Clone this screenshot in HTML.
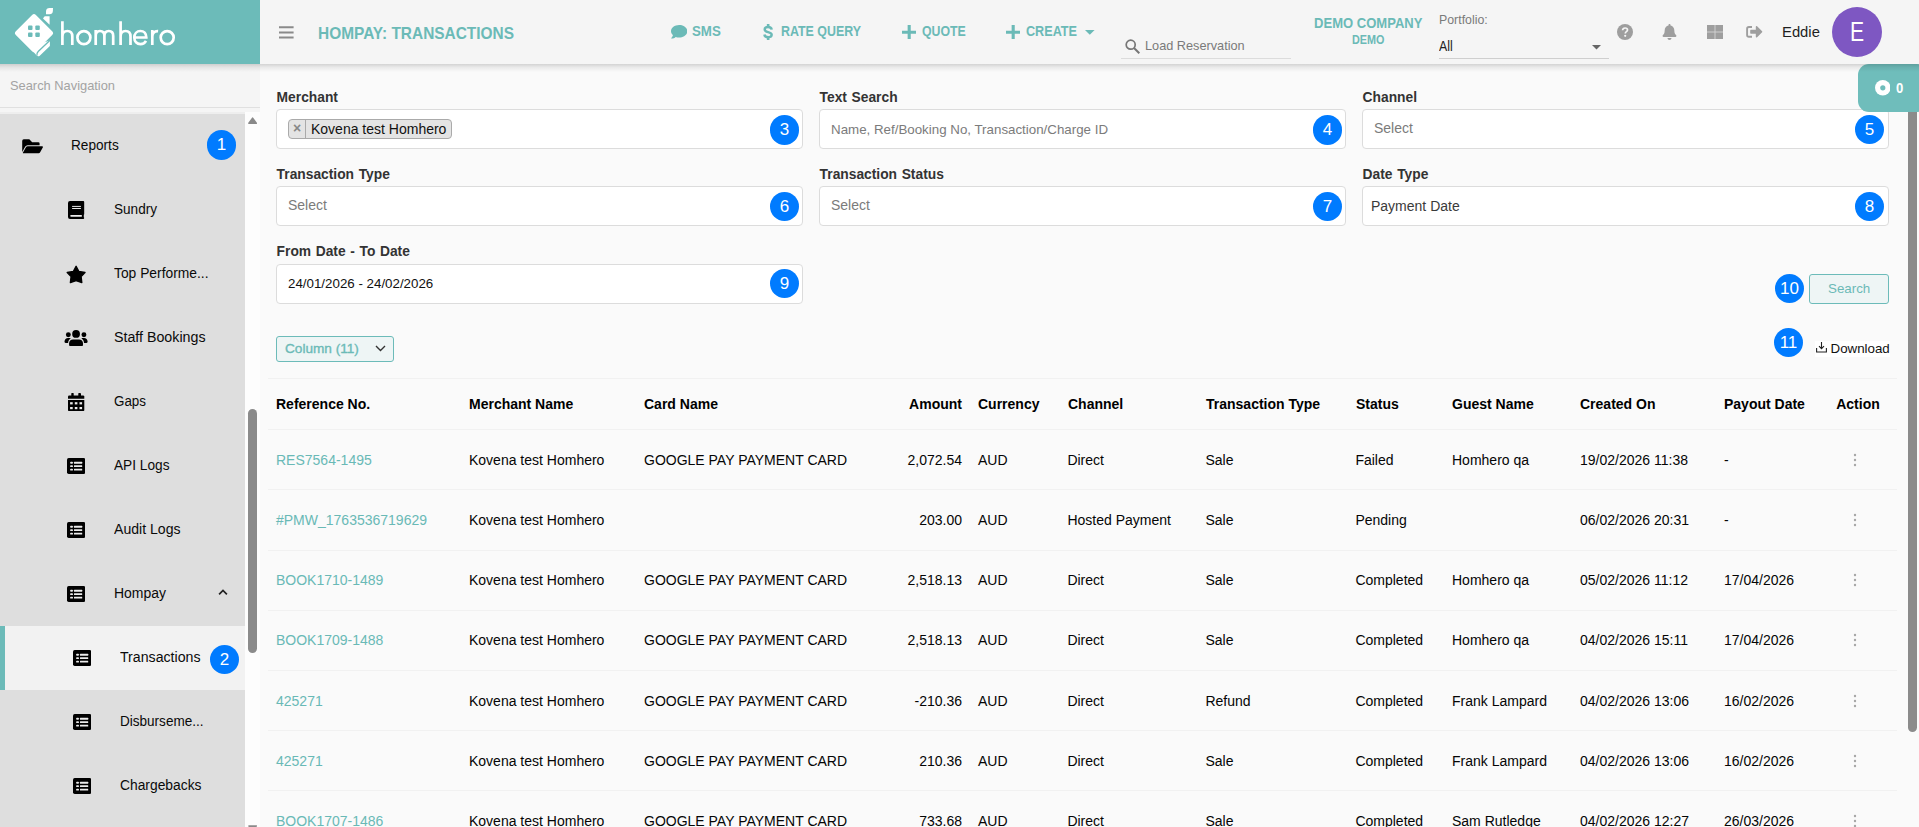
<!DOCTYPE html>
<html lang="en"><head><meta charset="utf-8"><title>Hompay: Transactions</title>
<style>
*{box-sizing:border-box}
html,body{margin:0;padding:0;background:#fafafa}
body{width:1919px;height:827px;overflow:hidden;position:relative;font-family:"Liberation Sans",sans-serif;font-size:14px;color:#222}
#app{position:absolute;left:0;top:0;width:1919px;height:827px;overflow:hidden;background:#fafafa}
#app span,#app div,#app svg{position:absolute}
.bdg{border-radius:50%;background:#007bff;color:#fff;text-align:center;font-family:"Liberation Sans",sans-serif}
.box{background:#fff;border:1px solid #dcdcdc;border-radius:4px}
.hl{height:1px;background:#f1f1f1;left:268px;width:1629px}
</style></head>
<body><div id="app">
<span style="position:absolute;top:87.50px;line-height:20px;font-size:13.8px;color:#333;font-weight:700;white-space:pre;word-spacing:0.8px;left:276.60px;">Merchant</span>
<div class="box" style="left:276px;top:109px;width:527px;height:39.5px"></div>
<span class="bdg" style="left:769.85px;top:115.45px;width:29.5px;height:29.5px;line-height:29.5px;font-size:17px">3</span>
<span style="position:absolute;top:87.50px;line-height:20px;font-size:13.8px;color:#333;font-weight:700;white-space:pre;word-spacing:0.8px;left:819.60px;">Text Search</span>
<div class="box" style="left:819px;top:109px;width:527px;height:39.5px"></div>
<span class="bdg" style="left:1312.85px;top:115.45px;width:29.5px;height:29.5px;line-height:29.5px;font-size:17px">4</span>
<span style="position:absolute;top:87.50px;line-height:20px;font-size:13.8px;color:#333;font-weight:700;white-space:pre;word-spacing:0.8px;left:1362.60px;">Channel</span>
<div class="box" style="left:1362px;top:109px;width:527px;height:39.5px"></div>
<span class="bdg" style="left:1854.85px;top:114.85px;width:29.5px;height:29.5px;line-height:29.5px;font-size:17px">5</span>
<span style="position:absolute;top:164.50px;line-height:20px;font-size:13.8px;color:#333;font-weight:700;white-space:pre;word-spacing:0.8px;left:276.60px;">Transaction Type</span>
<div class="box" style="left:276px;top:186.2px;width:527px;height:39.5px"></div>
<span class="bdg" style="left:769.85px;top:191.65px;width:29.5px;height:29.5px;line-height:29.5px;font-size:17px">6</span>
<span style="position:absolute;top:164.50px;line-height:20px;font-size:13.8px;color:#333;font-weight:700;white-space:pre;word-spacing:0.8px;left:819.60px;">Transaction Status</span>
<div class="box" style="left:819px;top:186.2px;width:527px;height:39.5px"></div>
<span class="bdg" style="left:1312.85px;top:191.65px;width:29.5px;height:29.5px;line-height:29.5px;font-size:17px">7</span>
<span style="position:absolute;top:164.50px;line-height:20px;font-size:13.8px;color:#333;font-weight:700;white-space:pre;word-spacing:0.8px;left:1362.60px;">Date Type</span>
<div class="box" style="left:1362px;top:186.2px;width:527px;height:39.5px"></div>
<span class="bdg" style="left:1854.85px;top:191.65px;width:29.5px;height:29.5px;line-height:29.5px;font-size:17px">8</span>
<span style="position:absolute;top:241.50px;line-height:20px;font-size:13.8px;color:#333;font-weight:700;white-space:pre;word-spacing:0.8px;left:276.60px;">From Date - To Date</span>
<div class="box" style="left:276px;top:264px;width:527px;height:39.5px"></div>
<span class="bdg" style="left:769.85px;top:268.65px;width:29.5px;height:29.5px;line-height:29.5px;font-size:17px">9</span>
<div style="left:288px;top:119px;width:164px;height:20px;border:1px solid #aaa;border-radius:4px;background:#e4e4e4"></div>
<div style="left:304.500px;top:120px;width:1px;height:18px;background:#aaa"></div>
<span style="position:absolute;top:118.00px;line-height:20px;font-size:14px;color:#888;font-weight:700;white-space:pre;left:293.00px;">×</span>
<span style="position:absolute;top:119.00px;line-height:20px;font-size:14px;color:#111;font-weight:400;white-space:pre;left:311.00px;">Kovena test Homhero</span>
<span style="position:absolute;top:120.20px;line-height:20px;font-size:13.333px;color:#7b7b7b;font-weight:400;white-space:pre;left:831.00px;">Name, Ref/Booking No, Transaction/Charge ID</span>
<span style="position:absolute;top:117.60px;line-height:20px;font-size:14px;color:#7b7b7b;font-weight:400;white-space:pre;left:1374.00px;">Select</span>
<span style="position:absolute;top:194.60px;line-height:20px;font-size:14px;color:#7b7b7b;font-weight:400;white-space:pre;left:288.00px;">Select</span>
<span style="position:absolute;top:194.60px;line-height:20px;font-size:14px;color:#7b7b7b;font-weight:400;white-space:pre;left:831.00px;">Select</span>
<span style="position:absolute;top:196.30px;line-height:20px;font-size:14px;color:#3a3a3a;font-weight:400;white-space:pre;left:1371.00px;">Payment Date</span>
<span style="position:absolute;top:273.50px;line-height:20px;font-size:13.333px;color:#111;font-weight:400;white-space:pre;left:288.00px;">24/01/2026 - 24/02/2026</span>
<div style="left:1809.200px;top:274px;width:80.200px;height:29.500px;border:1px solid #6cbbb9;border-radius:3px;background:#eef5f5"></div>
<span style="position:absolute;top:278.60px;line-height:20px;font-size:13.333px;color:#6bbab7;font-weight:400;white-space:pre;left:1828.00px;">Search</span>
<span class="bdg" style="left:1774.75px;top:273.95px;width:29.5px;height:29.5px;line-height:29.5px;font-size:17px">10</span>
<span class="bdg" style="left:1773.75px;top:327.95px;width:29.5px;height:29.5px;line-height:29.5px;font-size:17px">11</span>
<div style="left:1814.500px;top:341px;width:75px;height:15.500px;background:#fff"></div>
<svg style="left:1815.500px;top:342px" width="11" height="11" viewBox="0 0 11 11"><path d="M.6 6v4h9.800V6M5.500 0v6.500M3 4.200l2.500 2.500L8 4.200" fill="none" stroke="#222" stroke-width="1.100"/></svg>
<span style="position:absolute;top:338.60px;line-height:20px;font-size:13.333px;color:#111;font-weight:400;white-space:pre;left:1830.50px;">Download</span>
<div style="left:276px;top:336.200px;width:118px;height:25.600px;border:1px solid #6cbbb9;border-radius:3px;background:#eef5f5"></div>
<span style="position:absolute;top:338.60px;line-height:20px;font-size:13.7px;color:#6bbab7;font-weight:400;white-space:pre;-webkit-text-stroke:.35px #6bbab7;left:285.20px;transform:scaleX(0.9947);transform-origin:0 50%;">Column (11)</span>
<svg style="left:374.900px;top:345.400px" width="11" height="7" viewBox="0 0 11 7"><path d="M1 1l4.500 4.500L10 1" fill="none" stroke="#333" stroke-width="1.400"/></svg>
<div class="hl" style="top:378px"></div>
<div class="hl" style="top:429px"></div>
<div class="hl" style="top:489px"></div>
<div class="hl" style="top:550px"></div>
<div class="hl" style="top:610px"></div>
<div class="hl" style="top:670px"></div>
<div class="hl" style="top:730px"></div>
<div class="hl" style="top:790px"></div>
<span style="position:absolute;top:394.30px;line-height:20px;font-size:14px;color:#000;font-weight:700;white-space:pre;left:276.00px;">Reference No.</span>
<span style="position:absolute;top:394.30px;line-height:20px;font-size:14px;color:#000;font-weight:700;white-space:pre;left:469.00px;">Merchant Name</span>
<span style="position:absolute;top:394.30px;line-height:20px;font-size:14px;color:#000;font-weight:700;white-space:pre;left:644.00px;">Card Name</span>
<span style="position:absolute;top:394.30px;line-height:20px;font-size:14px;color:#000;font-weight:700;white-space:pre;left:978.00px;">Currency</span>
<span style="position:absolute;top:394.30px;line-height:20px;font-size:14px;color:#000;font-weight:700;white-space:pre;left:1068.00px;">Channel</span>
<span style="position:absolute;top:394.30px;line-height:20px;font-size:14px;color:#000;font-weight:700;white-space:pre;left:1206.00px;">Transaction Type</span>
<span style="position:absolute;top:394.30px;line-height:20px;font-size:14px;color:#000;font-weight:700;white-space:pre;left:1356.00px;">Status</span>
<span style="position:absolute;top:394.30px;line-height:20px;font-size:14px;color:#000;font-weight:700;white-space:pre;left:1452.00px;">Guest Name</span>
<span style="position:absolute;top:394.30px;line-height:20px;font-size:14px;color:#000;font-weight:700;white-space:pre;left:1580.00px;">Created On</span>
<span style="position:absolute;top:394.30px;line-height:20px;font-size:14px;color:#000;font-weight:700;white-space:pre;left:1724.00px;">Payout Date</span>
<span style="position:absolute;top:394.30px;line-height:20px;font-size:14px;color:#000;font-weight:700;white-space:pre;left:1836.20px;">Action</span>
<span style="position:absolute;top:394.30px;line-height:20px;font-size:14px;color:#000;font-weight:700;white-space:pre;right:957.00px;">Amount</span>
<span style="position:absolute;top:450.30px;line-height:20px;font-size:14px;color:#69b9b6;font-weight:400;white-space:pre;left:276.00px;">RES7564-1495</span>
<span style="position:absolute;top:450.30px;line-height:20px;font-size:14px;color:#050505;font-weight:400;white-space:pre;left:469.00px;">Kovena test Homhero</span>
<span style="position:absolute;top:450.30px;line-height:20px;font-size:14px;color:#050505;font-weight:400;white-space:pre;left:644.00px;">GOOGLE PAY PAYMENT CARD</span>
<span style="position:absolute;top:450.30px;line-height:20px;font-size:14px;color:#050505;font-weight:400;white-space:pre;right:957.00px;">2,072.54</span>
<span style="position:absolute;top:450.30px;line-height:20px;font-size:14px;color:#050505;font-weight:400;white-space:pre;left:978.00px;">AUD</span>
<span style="position:absolute;top:450.30px;line-height:20px;font-size:14px;color:#050505;font-weight:400;white-space:pre;left:1067.40px;">Direct</span>
<span style="position:absolute;top:450.30px;line-height:20px;font-size:14px;color:#050505;font-weight:400;white-space:pre;left:1205.40px;">Sale</span>
<span style="position:absolute;top:450.30px;line-height:20px;font-size:14px;color:#050505;font-weight:400;white-space:pre;left:1355.40px;">Failed</span>
<span style="position:absolute;top:450.30px;line-height:20px;font-size:14px;color:#050505;font-weight:400;white-space:pre;left:1452.00px;">Homhero qa</span>
<span style="position:absolute;top:450.30px;line-height:20px;font-size:14px;color:#050505;font-weight:400;white-space:pre;left:1580.00px;">19/02/2026 11:38</span>
<span style="position:absolute;top:450.30px;line-height:20px;font-size:14px;color:#050505;font-weight:400;white-space:pre;left:1724.00px;">-</span>
<svg style="left:1853px;top:453.00px" width="4" height="14" viewBox="0 0 4 14"><g fill="#a6a6a6"><circle cx="2" cy="2" r="1.200"/><circle cx="2" cy="7" r="1.200"/><circle cx="2" cy="12" r="1.200"/></g></svg>
<span style="position:absolute;top:510.30px;line-height:20px;font-size:14px;color:#69b9b6;font-weight:400;white-space:pre;left:276.00px;">#PMW_1763536719629</span>
<span style="position:absolute;top:510.30px;line-height:20px;font-size:14px;color:#050505;font-weight:400;white-space:pre;left:469.00px;">Kovena test Homhero</span>
<span style="position:absolute;top:510.30px;line-height:20px;font-size:14px;color:#050505;font-weight:400;white-space:pre;right:957.00px;">203.00</span>
<span style="position:absolute;top:510.30px;line-height:20px;font-size:14px;color:#050505;font-weight:400;white-space:pre;left:978.00px;">AUD</span>
<span style="position:absolute;top:510.30px;line-height:20px;font-size:14px;color:#050505;font-weight:400;white-space:pre;left:1067.40px;">Hosted Payment</span>
<span style="position:absolute;top:510.30px;line-height:20px;font-size:14px;color:#050505;font-weight:400;white-space:pre;left:1205.40px;">Sale</span>
<span style="position:absolute;top:510.30px;line-height:20px;font-size:14px;color:#050505;font-weight:400;white-space:pre;left:1355.40px;">Pending</span>
<span style="position:absolute;top:510.30px;line-height:20px;font-size:14px;color:#050505;font-weight:400;white-space:pre;left:1580.00px;">06/02/2026 20:31</span>
<span style="position:absolute;top:510.30px;line-height:20px;font-size:14px;color:#050505;font-weight:400;white-space:pre;left:1724.00px;">-</span>
<svg style="left:1853px;top:513.00px" width="4" height="14" viewBox="0 0 4 14"><g fill="#a6a6a6"><circle cx="2" cy="2" r="1.200"/><circle cx="2" cy="7" r="1.200"/><circle cx="2" cy="12" r="1.200"/></g></svg>
<span style="position:absolute;top:570.30px;line-height:20px;font-size:14px;color:#69b9b6;font-weight:400;white-space:pre;left:276.00px;">BOOK1710-1489</span>
<span style="position:absolute;top:570.30px;line-height:20px;font-size:14px;color:#050505;font-weight:400;white-space:pre;left:469.00px;">Kovena test Homhero</span>
<span style="position:absolute;top:570.30px;line-height:20px;font-size:14px;color:#050505;font-weight:400;white-space:pre;left:644.00px;">GOOGLE PAY PAYMENT CARD</span>
<span style="position:absolute;top:570.30px;line-height:20px;font-size:14px;color:#050505;font-weight:400;white-space:pre;right:957.00px;">2,518.13</span>
<span style="position:absolute;top:570.30px;line-height:20px;font-size:14px;color:#050505;font-weight:400;white-space:pre;left:978.00px;">AUD</span>
<span style="position:absolute;top:570.30px;line-height:20px;font-size:14px;color:#050505;font-weight:400;white-space:pre;left:1067.40px;">Direct</span>
<span style="position:absolute;top:570.30px;line-height:20px;font-size:14px;color:#050505;font-weight:400;white-space:pre;left:1205.40px;">Sale</span>
<span style="position:absolute;top:570.30px;line-height:20px;font-size:14px;color:#050505;font-weight:400;white-space:pre;left:1355.40px;">Completed</span>
<span style="position:absolute;top:570.30px;line-height:20px;font-size:14px;color:#050505;font-weight:400;white-space:pre;left:1452.00px;">Homhero qa</span>
<span style="position:absolute;top:570.30px;line-height:20px;font-size:14px;color:#050505;font-weight:400;white-space:pre;left:1580.00px;">05/02/2026 11:12</span>
<span style="position:absolute;top:570.30px;line-height:20px;font-size:14px;color:#050505;font-weight:400;white-space:pre;left:1724.00px;">17/04/2026</span>
<svg style="left:1853px;top:573.00px" width="4" height="14" viewBox="0 0 4 14"><g fill="#a6a6a6"><circle cx="2" cy="2" r="1.200"/><circle cx="2" cy="7" r="1.200"/><circle cx="2" cy="12" r="1.200"/></g></svg>
<span style="position:absolute;top:630.30px;line-height:20px;font-size:14px;color:#69b9b6;font-weight:400;white-space:pre;left:276.00px;">BOOK1709-1488</span>
<span style="position:absolute;top:630.30px;line-height:20px;font-size:14px;color:#050505;font-weight:400;white-space:pre;left:469.00px;">Kovena test Homhero</span>
<span style="position:absolute;top:630.30px;line-height:20px;font-size:14px;color:#050505;font-weight:400;white-space:pre;left:644.00px;">GOOGLE PAY PAYMENT CARD</span>
<span style="position:absolute;top:630.30px;line-height:20px;font-size:14px;color:#050505;font-weight:400;white-space:pre;right:957.00px;">2,518.13</span>
<span style="position:absolute;top:630.30px;line-height:20px;font-size:14px;color:#050505;font-weight:400;white-space:pre;left:978.00px;">AUD</span>
<span style="position:absolute;top:630.30px;line-height:20px;font-size:14px;color:#050505;font-weight:400;white-space:pre;left:1067.40px;">Direct</span>
<span style="position:absolute;top:630.30px;line-height:20px;font-size:14px;color:#050505;font-weight:400;white-space:pre;left:1205.40px;">Sale</span>
<span style="position:absolute;top:630.30px;line-height:20px;font-size:14px;color:#050505;font-weight:400;white-space:pre;left:1355.40px;">Completed</span>
<span style="position:absolute;top:630.30px;line-height:20px;font-size:14px;color:#050505;font-weight:400;white-space:pre;left:1452.00px;">Homhero qa</span>
<span style="position:absolute;top:630.30px;line-height:20px;font-size:14px;color:#050505;font-weight:400;white-space:pre;left:1580.00px;">04/02/2026 15:11</span>
<span style="position:absolute;top:630.30px;line-height:20px;font-size:14px;color:#050505;font-weight:400;white-space:pre;left:1724.00px;">17/04/2026</span>
<svg style="left:1853px;top:633.00px" width="4" height="14" viewBox="0 0 4 14"><g fill="#a6a6a6"><circle cx="2" cy="2" r="1.200"/><circle cx="2" cy="7" r="1.200"/><circle cx="2" cy="12" r="1.200"/></g></svg>
<span style="position:absolute;top:691.30px;line-height:20px;font-size:14px;color:#69b9b6;font-weight:400;white-space:pre;left:276.00px;">425271</span>
<span style="position:absolute;top:691.30px;line-height:20px;font-size:14px;color:#050505;font-weight:400;white-space:pre;left:469.00px;">Kovena test Homhero</span>
<span style="position:absolute;top:691.30px;line-height:20px;font-size:14px;color:#050505;font-weight:400;white-space:pre;left:644.00px;">GOOGLE PAY PAYMENT CARD</span>
<span style="position:absolute;top:691.30px;line-height:20px;font-size:14px;color:#050505;font-weight:400;white-space:pre;right:957.00px;">-210.36</span>
<span style="position:absolute;top:691.30px;line-height:20px;font-size:14px;color:#050505;font-weight:400;white-space:pre;left:978.00px;">AUD</span>
<span style="position:absolute;top:691.30px;line-height:20px;font-size:14px;color:#050505;font-weight:400;white-space:pre;left:1067.40px;">Direct</span>
<span style="position:absolute;top:691.30px;line-height:20px;font-size:14px;color:#050505;font-weight:400;white-space:pre;left:1205.40px;">Refund</span>
<span style="position:absolute;top:691.30px;line-height:20px;font-size:14px;color:#050505;font-weight:400;white-space:pre;left:1355.40px;">Completed</span>
<span style="position:absolute;top:691.30px;line-height:20px;font-size:14px;color:#050505;font-weight:400;white-space:pre;left:1452.00px;">Frank Lampard</span>
<span style="position:absolute;top:691.30px;line-height:20px;font-size:14px;color:#050505;font-weight:400;white-space:pre;left:1580.00px;">04/02/2026 13:06</span>
<span style="position:absolute;top:691.30px;line-height:20px;font-size:14px;color:#050505;font-weight:400;white-space:pre;left:1724.00px;">16/02/2026</span>
<svg style="left:1853px;top:694.00px" width="4" height="14" viewBox="0 0 4 14"><g fill="#a6a6a6"><circle cx="2" cy="2" r="1.200"/><circle cx="2" cy="7" r="1.200"/><circle cx="2" cy="12" r="1.200"/></g></svg>
<span style="position:absolute;top:751.30px;line-height:20px;font-size:14px;color:#69b9b6;font-weight:400;white-space:pre;left:276.00px;">425271</span>
<span style="position:absolute;top:751.30px;line-height:20px;font-size:14px;color:#050505;font-weight:400;white-space:pre;left:469.00px;">Kovena test Homhero</span>
<span style="position:absolute;top:751.30px;line-height:20px;font-size:14px;color:#050505;font-weight:400;white-space:pre;left:644.00px;">GOOGLE PAY PAYMENT CARD</span>
<span style="position:absolute;top:751.30px;line-height:20px;font-size:14px;color:#050505;font-weight:400;white-space:pre;right:957.00px;">210.36</span>
<span style="position:absolute;top:751.30px;line-height:20px;font-size:14px;color:#050505;font-weight:400;white-space:pre;left:978.00px;">AUD</span>
<span style="position:absolute;top:751.30px;line-height:20px;font-size:14px;color:#050505;font-weight:400;white-space:pre;left:1067.40px;">Direct</span>
<span style="position:absolute;top:751.30px;line-height:20px;font-size:14px;color:#050505;font-weight:400;white-space:pre;left:1205.40px;">Sale</span>
<span style="position:absolute;top:751.30px;line-height:20px;font-size:14px;color:#050505;font-weight:400;white-space:pre;left:1355.40px;">Completed</span>
<span style="position:absolute;top:751.30px;line-height:20px;font-size:14px;color:#050505;font-weight:400;white-space:pre;left:1452.00px;">Frank Lampard</span>
<span style="position:absolute;top:751.30px;line-height:20px;font-size:14px;color:#050505;font-weight:400;white-space:pre;left:1580.00px;">04/02/2026 13:06</span>
<span style="position:absolute;top:751.30px;line-height:20px;font-size:14px;color:#050505;font-weight:400;white-space:pre;left:1724.00px;">16/02/2026</span>
<svg style="left:1853px;top:754.00px" width="4" height="14" viewBox="0 0 4 14"><g fill="#a6a6a6"><circle cx="2" cy="2" r="1.200"/><circle cx="2" cy="7" r="1.200"/><circle cx="2" cy="12" r="1.200"/></g></svg>
<span style="position:absolute;top:811.30px;line-height:20px;font-size:14px;color:#69b9b6;font-weight:400;white-space:pre;left:276.00px;">BOOK1707-1486</span>
<span style="position:absolute;top:811.30px;line-height:20px;font-size:14px;color:#050505;font-weight:400;white-space:pre;left:469.00px;">Kovena test Homhero</span>
<span style="position:absolute;top:811.30px;line-height:20px;font-size:14px;color:#050505;font-weight:400;white-space:pre;left:644.00px;">GOOGLE PAY PAYMENT CARD</span>
<span style="position:absolute;top:811.30px;line-height:20px;font-size:14px;color:#050505;font-weight:400;white-space:pre;right:957.00px;">733.68</span>
<span style="position:absolute;top:811.30px;line-height:20px;font-size:14px;color:#050505;font-weight:400;white-space:pre;left:978.00px;">AUD</span>
<span style="position:absolute;top:811.30px;line-height:20px;font-size:14px;color:#050505;font-weight:400;white-space:pre;left:1067.40px;">Direct</span>
<span style="position:absolute;top:811.30px;line-height:20px;font-size:14px;color:#050505;font-weight:400;white-space:pre;left:1205.40px;">Sale</span>
<span style="position:absolute;top:811.30px;line-height:20px;font-size:14px;color:#050505;font-weight:400;white-space:pre;left:1355.40px;">Completed</span>
<span style="position:absolute;top:811.30px;line-height:20px;font-size:14px;color:#050505;font-weight:400;white-space:pre;left:1452.00px;">Sam Rutledge</span>
<span style="position:absolute;top:811.30px;line-height:20px;font-size:14px;color:#050505;font-weight:400;white-space:pre;left:1580.00px;">04/02/2026 12:27</span>
<span style="position:absolute;top:811.30px;line-height:20px;font-size:14px;color:#050505;font-weight:400;white-space:pre;left:1724.00px;">26/03/2026</span>
<svg style="left:1853px;top:814.00px" width="4" height="14" viewBox="0 0 4 14"><g fill="#a6a6a6"><circle cx="2" cy="2" r="1.200"/><circle cx="2" cy="7" r="1.200"/><circle cx="2" cy="12" r="1.200"/></g></svg>
<div style="left:1908px;top:70px;width:9px;height:662px;border-radius:4.500px;background:#8b8b8b"></div>
<div style="left:1858px;top:64px;width:70px;height:47.700px;border-radius:11px;background:#6fbdbb"></div><svg style="left:1874.600px;top:80.200px" width="15.600" height="15.600" viewBox="0 0 15.600 15.600"><circle cx="7.800" cy="7.800" r="7.800" fill="#fff"/><circle cx="7.800" cy="7.800" r="2.600" fill="#6fbdbb"/></svg><span style="position:absolute;top:77.80px;line-height:20px;font-size:14.5px;color:#fff;font-weight:700;white-space:pre;left:1895.90px;transform:scaleX(0.9037);transform-origin:0 50%;">0</span>
<div style="left:0;top:64px;width:260px;height:763px;background:#f5f5f5"></div>
<div style="left:0;top:107px;width:260px;height:1px;background:#e0e0e0"></div>
<span style="position:absolute;top:75.50px;line-height:20px;font-size:13px;color:#a3a3a3;font-weight:400;white-space:pre;left:10.20px;transform:scaleX(0.9884);transform-origin:0 50%;">Search Navigation</span>
<div style="left:0;top:112px;width:245px;height:2px;background:#eee"></div><div style="left:0;top:114px;width:245px;height:714px;background:#dedede"></div>
<div style="left:245px;top:112px;width:15px;height:716px;background:#fdfdfd"></div>
<svg style="left:247.900px;top:116.700px" width="9.200" height="7.200" viewBox="0 0 9.200 7.200"><path d="M4.600 1.100 8.300 6.300H.9z" fill="#8a8a8a" stroke="#8a8a8a" stroke-width="1.500" stroke-linejoin="round"/></svg>
<svg style="left:247.900px;top:825.400px" width="9.200" height="7.200" viewBox="0 0 9.200 7.200"><path d="M4.600 6.100 8.300.9H.9z" fill="#8a8a8a" stroke="#8a8a8a" stroke-width="1.500" stroke-linejoin="round"/></svg>
<div style="left:248px;top:409px;width:9px;height:244px;border-radius:4.500px;background:#8b8b8b"></div>
<div style="left:0;top:626px;width:245px;height:64.300px;background:#f2f2f2"></div>
<div style="left:0;top:626px;width:5px;height:64.300px;background:#6cbbb9"></div>
<svg style="left:21.5px;top:138.5px" width="21.500" height="15" viewBox="0 0 21.500 15"><path fill="#000" d="M.2 1.900Q.2.300 1.800.300H7.300L10.200 3.200H16.300Q17.600 3.200 17.600 4.500V6.200H5.700Q3.900 6.200 3.100 7.700L.2 13.100zM5.800 7.300H20.200Q21.400 7.300 20.800 8.400L18 13.600Q17.600 14.300 16.700 14.300H1.500Q.5 14.300 1 13.400L3.800 8.400Q4.400 7.300 5.800 7.300z"/></svg>
<span style="position:absolute;top:135.20px;line-height:20px;font-size:14px;color:#0a0a0a;font-weight:400;white-space:pre;left:70.50px;transform:scaleX(0.9728);transform-origin:0 50%;">Reports</span>
<svg style="left:68.3px;top:201px" width="16.400" height="18" viewBox="0 0 16.400 18"><path fill="#000" d="M2 0H15.300Q16.200 0 16.200.900V13Q16.200 13.600 15.800 13.800V16.200Q16.200 16.400 16.200 16.900Q16.200 17.900 15.300 17.900H2Q0 17.900 0 15.900V2Q0 0 2 0z"/><g fill="#ececec"><rect x="4.100" y="4.900" width="8.800" height="1"/><rect x="4.100" y="7" width="8.800" height="1"/><path d="M3.200 13.900H13.800V15.800H3.200Q2.200 15.800 2.200 14.850Q2.200 13.900 3.200 13.900z"/></g></svg>
<span style="position:absolute;top:199.20px;line-height:20px;font-size:14px;color:#0a0a0a;font-weight:400;white-space:pre;left:114.00px;transform:scaleX(0.9694);transform-origin:0 50%;">Sundry</span>
<svg style="left:66px;top:264.5px" width="20.500" height="19" viewBox="0 0 20.500 19"><path fill="#000" stroke="#000" stroke-width="1.400" stroke-linejoin="round" d="M10.100 1.300 12.900 6.500 19 7.500 15.100 11.600 15.800 17.500 10.100 15.700 4.400 17.500 5.100 11.600 1.200 7.500 7.300 6.500z"/></svg>
<span style="position:absolute;top:263.20px;line-height:20px;font-size:14px;color:#0a0a0a;font-weight:400;white-space:pre;left:114.00px;transform:scaleX(0.9874);transform-origin:0 50%;">Top Performe...</span>
<svg style="left:64px;top:330px" width="24.200" height="16.500" viewBox="0 0 24.200 16.500"><g fill="#000"><circle cx="12.070" cy="3.960" r="3.900"/><path d="M5.100 14.900V13.200C5.100 11 6.800 9.400 9 9.400h6.100c2.200 0 3.900 1.600 3.900 3.800V14.900c0 .6-.5 1.100-1.100 1.100H6.200c-.6 0-1.100-.5-1.100-1.100z"/><circle cx="4.330" cy="4.800" r="2.450"/><circle cx="19.950" cy="4.800" r="2.450"/><path d="M.5 11.800C.5 9.700 2 8.100 4.100 8.100h1.300c.5 0 .9.100 1.300.3C5.200 9.300 4.200 10.900 4.100 12.900H1.600C1 12.900.5 12.400.5 11.800zM23.640 11.800c0-2.100-1.500-3.700-3.600-3.700h-1.300c-.5 0-.9.100-1.300.3 1.500.9 2.500 2.500 2.600 4.500h2.500c.6 0 1.100-.5 1.100-1.100z"/></g></svg>
<span style="position:absolute;top:327.20px;line-height:20px;font-size:14px;color:#0a0a0a;font-weight:400;white-space:pre;left:114.00px;transform:scaleX(1.0163);transform-origin:0 50%;">Staff Bookings</span>
<svg style="left:68.2px;top:392.9px" width="16.400" height="18.200" viewBox="0 0 16.400 18.200"><g fill="#000"><path d="M0 3.600Q0 2.400 1.200 2.400H15.100Q16.300 2.400 16.300 3.600V5.800H0z"/><path d="M0 7.100H16.300V16.900Q16.300 18.100 15.100 18.100H1.200Q0 18.100 0 16.900z"/><rect x="3.300" y="0" width="2.400" height="3.400" rx=".5"/><rect x="10.300" y="0" width="2.700" height="3.400" rx=".5"/></g><g fill="#ececec"><rect x="2.100" y="9.200" width="2.600" height="2.200"/><rect x="6.800" y="9.200" width="2.600" height="2.200"/><rect x="11.500" y="9.200" width="2.600" height="2.200"/><rect x="2.100" y="14" width="2.600" height="2.200"/><rect x="6.800" y="14" width="2.600" height="2.200"/><rect x="11.500" y="14" width="2.600" height="2.200"/></g></svg>
<span style="position:absolute;top:391.20px;line-height:20px;font-size:14px;color:#0a0a0a;font-weight:400;white-space:pre;left:114.00px;transform:scaleX(0.9561);transform-origin:0 50%;">Gaps</span>
<svg style="left:66.9px;top:458.1px" width="18.400" height="16" viewBox="0 0 18.400 16"><rect width="18.400" height="16" rx="1.700" fill="#000"/><g fill="#ececec"><rect x="3.100" y="3.850" width="2.900" height="1.900" rx=".9"/><rect x="3.100" y="7.150" width="2.900" height="1.900" rx=".9"/><rect x="3.100" y="10.650" width="2.900" height="1.900" rx=".9"/><rect x="7" y="3.850" width="8.200" height="1.900" rx=".3"/><rect x="7" y="7.150" width="8.200" height="1.900" rx=".3"/><rect x="7" y="10.650" width="8.200" height="1.900" rx=".3"/></g></svg>
<span style="position:absolute;top:455.20px;line-height:20px;font-size:14px;color:#0a0a0a;font-weight:400;white-space:pre;left:114.00px;transform:scaleX(0.9766);transform-origin:0 50%;">API Logs</span>
<svg style="left:66.9px;top:522.1px" width="18.400" height="16" viewBox="0 0 18.400 16"><rect width="18.400" height="16" rx="1.700" fill="#000"/><g fill="#ececec"><rect x="3.100" y="3.850" width="2.900" height="1.900" rx=".9"/><rect x="3.100" y="7.150" width="2.900" height="1.900" rx=".9"/><rect x="3.100" y="10.650" width="2.900" height="1.900" rx=".9"/><rect x="7" y="3.850" width="8.200" height="1.900" rx=".3"/><rect x="7" y="7.150" width="8.200" height="1.900" rx=".3"/><rect x="7" y="10.650" width="8.200" height="1.900" rx=".3"/></g></svg>
<span style="position:absolute;top:519.20px;line-height:20px;font-size:14px;color:#0a0a0a;font-weight:400;white-space:pre;left:114.00px;transform:scaleX(1.0050);transform-origin:0 50%;">Audit Logs</span>
<svg style="left:66.9px;top:586.1px" width="18.400" height="16" viewBox="0 0 18.400 16"><rect width="18.400" height="16" rx="1.700" fill="#000"/><g fill="#ececec"><rect x="3.100" y="3.850" width="2.900" height="1.900" rx=".9"/><rect x="3.100" y="7.150" width="2.900" height="1.900" rx=".9"/><rect x="3.100" y="10.650" width="2.900" height="1.900" rx=".9"/><rect x="7" y="3.850" width="8.200" height="1.900" rx=".3"/><rect x="7" y="7.150" width="8.200" height="1.900" rx=".3"/><rect x="7" y="10.650" width="8.200" height="1.900" rx=".3"/></g></svg>
<span style="position:absolute;top:583.20px;line-height:20px;font-size:14px;color:#0a0a0a;font-weight:400;white-space:pre;left:114.00px;transform:scaleX(0.9973);transform-origin:0 50%;">Hompay</span>
<svg style="left:72.9px;top:650.1px" width="18.400" height="16" viewBox="0 0 18.400 16"><rect width="18.400" height="16" rx="1.700" fill="#000"/><g fill="#ececec"><rect x="3.100" y="3.850" width="2.900" height="1.900" rx=".9"/><rect x="3.100" y="7.150" width="2.900" height="1.900" rx=".9"/><rect x="3.100" y="10.650" width="2.900" height="1.900" rx=".9"/><rect x="7" y="3.850" width="8.200" height="1.900" rx=".3"/><rect x="7" y="7.150" width="8.200" height="1.900" rx=".3"/><rect x="7" y="10.650" width="8.200" height="1.900" rx=".3"/></g></svg>
<span style="position:absolute;top:647.20px;line-height:20px;font-size:14px;color:#0a0a0a;font-weight:400;white-space:pre;left:120.00px;transform:scaleX(1.0110);transform-origin:0 50%;">Transactions</span>
<svg style="left:72.9px;top:714.1px" width="18.400" height="16" viewBox="0 0 18.400 16"><rect width="18.400" height="16" rx="1.700" fill="#000"/><g fill="#ececec"><rect x="3.100" y="3.850" width="2.900" height="1.900" rx=".9"/><rect x="3.100" y="7.150" width="2.900" height="1.900" rx=".9"/><rect x="3.100" y="10.650" width="2.900" height="1.900" rx=".9"/><rect x="7" y="3.850" width="8.200" height="1.900" rx=".3"/><rect x="7" y="7.150" width="8.200" height="1.900" rx=".3"/><rect x="7" y="10.650" width="8.200" height="1.900" rx=".3"/></g></svg>
<span style="position:absolute;top:711.20px;line-height:20px;font-size:14px;color:#0a0a0a;font-weight:400;white-space:pre;left:120.00px;transform:scaleX(0.9669);transform-origin:0 50%;">Disburseme...</span>
<svg style="left:72.9px;top:778.1px" width="18.400" height="16" viewBox="0 0 18.400 16"><rect width="18.400" height="16" rx="1.700" fill="#000"/><g fill="#ececec"><rect x="3.100" y="3.850" width="2.900" height="1.900" rx=".9"/><rect x="3.100" y="7.150" width="2.900" height="1.900" rx=".9"/><rect x="3.100" y="10.650" width="2.900" height="1.900" rx=".9"/><rect x="7" y="3.850" width="8.200" height="1.900" rx=".3"/><rect x="7" y="7.150" width="8.200" height="1.900" rx=".3"/><rect x="7" y="10.650" width="8.200" height="1.900" rx=".3"/></g></svg>
<span style="position:absolute;top:775.20px;line-height:20px;font-size:14px;color:#0a0a0a;font-weight:400;white-space:pre;left:120.00px;transform:scaleX(0.9879);transform-origin:0 50%;">Chargebacks</span>
<svg style="left:217.800px;top:587.600px" width="10" height="8" viewBox="0 0 10 8"><path d="M1.100 6.400 5 2.400 8.900 6.400" fill="none" stroke="#222" stroke-width="1.700"/></svg>
<span class="bdg" style="left:206.75px;top:130.05px;width:29.5px;height:29.5px;line-height:29.5px;font-size:17px">1</span>
<span class="bdg" style="left:209.85px;top:644.65px;width:29.5px;height:29.5px;line-height:29.5px;font-size:17px">2</span>
<div style="left:0;top:0;width:1919px;height:64px;background:#f5f5f5"></div>
<div style="left:0;top:64px;width:1919px;height:8px;background:linear-gradient(rgba(0,0,0,.155),rgba(0,0,0,.07) 40%,rgba(0,0,0,.022) 78%,rgba(0,0,0,0))"></div>
<svg width="260" height="64" viewBox="0 0 260 64" style="left:0;top:0">
<rect width="260" height="64" fill="#6cbbb9"/>
<g fill="#fff">
<rect x="19.800" y="18.900" width="28.400" height="28.400" rx="2.700" transform="rotate(45 34 33.100)"/>
<path d="M29 47.300 35.400 54.100Q37.300 57.300 39.500 55.900L49.900 46.100V40.400z"/>
<path d="M46 14.300V11.200Q46.300 8.200 49.500 8.100L53 8 52.900 11Q52.600 14.200 49.500 14.300z"/>
<path d="M43 18.400 44.400 16.600Q44.700 16.200 45.300 16.200H49.600V24.800z"/>
</g>
<path d="M50.300 40.100 38.200 51.400Q36.300 53.200 37 55.700" fill="none" stroke="#6cbbb9" stroke-width="1.350"/>
<g fill="#6cbbb9">
<rect x="28" y="25.600" width="4.500" height="4.400" rx="1"/><rect x="35.300" y="25.600" width="4.500" height="4.400" rx="1"/>
<rect x="28" y="32.500" width="4.500" height="4.400" rx="1"/><rect x="35.300" y="32.500" width="4.500" height="4.400" rx="1"/>
</g>
<g fill="none" stroke="#fff" stroke-width="2.700">
<path d="M62.400 21.300V45M62.400 36.500C62.400 32.800 64.600 31 67.400 31c3 0 4.900 1.800 4.900 5.500V45"/>
<ellipse cx="83.900" cy="37.600" rx="6.500" ry="6.500"/>
<path d="M95.700 30V45M95.700 36C95.700 32.600 97.500 31 100 31c2.700 0 4.400 1.600 4.400 5V45M104.400 36c0-3.400 1.800-5 4.400-5 2.700 0 4.400 1.600 4.400 5V45"/>
<path d="M120.600 21.300V45M120.600 36.500c0-3.700 2.200-5.500 5-5.500 3 0 4.900 1.800 4.900 5.500V45"/>
<path d="M134.500 37.500H146.300C146.300 33.500 143.900 31 140.400 31c-3.500 0-6.100 2.800-6.100 6.600 0 3.800 2.600 6.500 6.200 6.500 2.600 0 4.400-1.200 5.500-3.200"/>
<path d="M152.300 30V45M152.300 36.500c0-3.500 2.200-5.600 5.800-5.300"/>
<ellipse cx="167.200" cy="37.600" rx="6.500" ry="6.500"/>
</g>
</svg>
<svg style="left:278.700px;top:25.600px" width="15" height="13" viewBox="0 0 15 13"><path d="M0 1.200h14.600M0 6.400h14.600M0 11.600h14.600" stroke="#8a8a8a" stroke-width="2"/></svg>
<span style="position:absolute;top:23.00px;line-height:20px;font-size:16.4px;color:#6bbab7;font-weight:700;white-space:pre;left:318.30px;transform:scaleX(0.9412);transform-origin:0 50%;">HOMPAY: TRANSACTIONS</span>
<svg style="left:670.700px;top:24.900px" width="16.300" height="14.400" viewBox="0 0 17 15"><path fill="#6bbab7" d="M8.500 0C13.200 0 17 2.900 17 6.500S13.200 13 8.500 13c-1.300 0-2.500-.2-3.600-.6C3.900 13.300 2.300 14.200.4 14.200c-.2 0-.3-.2-.2-.4.700-.8 1.600-2 1.800-3.300C.7 9.400 0 8 0 6.500 0 2.900 3.800 0 8.500 0z"/></svg>
<span style="position:absolute;top:21.20px;line-height:20px;font-size:14px;color:#6bbab7;font-weight:700;white-space:pre;left:692.00px;transform:scaleX(0.9491);transform-origin:0 50%;">SMS</span>
<svg style="left:763px;top:23.900px" width="10.200" height="16" viewBox="0 0 10.200 16"><path fill="none" stroke="#6bbab7" stroke-width="2.400" d="M8.700 5.700C8.500 3.900 7.100 3 5.100 3 3.100 3 1.700 4 1.700 5.500c0 1.600 1.300 2.100 3.400 2.600 2.200.5 3.600 1.100 3.600 2.700 0 1.500-1.400 2.400-3.500 2.400-2.100 0-3.600-.9-3.800-2.700"/><path fill="#6bbab7" d="M3.850 0h2.600v3.200h-2.600zM3.850 12.800h2.600V16h-2.600z"/></svg>
<span style="position:absolute;top:21.20px;line-height:20px;font-size:14px;color:#6bbab7;font-weight:700;white-space:pre;left:781.30px;transform:scaleX(0.8866);transform-origin:0 50%;">RATE QUERY</span>
<svg style="left:901.5px;top:24.800px" width="14.400" height="14.400" viewBox="0 0 14.400 14.400"><path d="M7.200 0V14.400M0 7.200H14.400" stroke="#6bbab7" stroke-width="3.100"/></svg>
<span style="position:absolute;top:21.20px;line-height:20px;font-size:14px;color:#6bbab7;font-weight:700;white-space:pre;left:922.00px;transform:scaleX(0.8798);transform-origin:0 50%;">QUOTE</span>
<svg style="left:1006px;top:24.800px" width="14.400" height="14.400" viewBox="0 0 14.400 14.400"><path d="M7.200 0V14.400M0 7.200H14.400" stroke="#6bbab7" stroke-width="3.100"/></svg>
<span style="position:absolute;top:21.20px;line-height:20px;font-size:14px;color:#6bbab7;font-weight:700;white-space:pre;left:1026.00px;transform:scaleX(0.9022);transform-origin:0 50%;">CREATE</span>
<svg style="left:1085px;top:29.500px" width="10" height="5" viewBox="0 0 10 5"><path d="M0 0h9.600L4.800 4.800z" fill="#6bbab7"/></svg>
<svg style="left:1125px;top:39.200px" width="16" height="15" viewBox="0 0 16 15"><circle cx="5.700" cy="5.700" r="4.500" fill="none" stroke="#777" stroke-width="1.700"/><path d="M9 9l5.300 5.300" stroke="#777" stroke-width="2"/></svg>
<span style="position:absolute;top:36.40px;line-height:20px;font-size:13px;color:#7a7a7a;font-weight:400;white-space:pre;left:1145.30px;transform:scaleX(0.9784);transform-origin:0 50%;">Load Reservation</span>
<div style="left:1121px;top:58px;width:170px;height:1px;background:#dcdcdc"></div>
<span style="position:absolute;top:13.40px;line-height:20px;font-size:14px;color:#6bbab7;font-weight:700;white-space:pre;left:1314.00px;transform:scaleX(0.9320);transform-origin:0 50%;">DEMO COMPANY</span>
<span style="position:absolute;top:29.80px;line-height:20px;font-size:12px;color:#6bbab7;font-weight:700;white-space:pre;left:1352.00px;transform:scaleX(0.9028);transform-origin:0 50%;">DEMO</span>
<span style="position:absolute;top:9.80px;line-height:20px;font-size:13px;color:#7a7a7a;font-weight:400;white-space:pre;left:1439.30px;transform:scaleX(0.9491);transform-origin:0 50%;">Portfolio:</span>
<span style="position:absolute;top:36.10px;line-height:20px;font-size:14px;color:#222;font-weight:400;white-space:pre;left:1439.30px;transform:scaleX(0.8803);transform-origin:0 50%;">All</span>
<svg style="left:1592.400px;top:44.700px" width="9" height="5" viewBox="0 0 9 5"><path d="M0 0h9L4.500 4.600z" fill="#666"/></svg>
<div style="left:1439px;top:58px;width:170px;height:1px;background:#cfcfcf"></div>
<svg style="left:1617px;top:24px" width="16" height="16" viewBox="0 0 16 16"><circle cx="8" cy="8" r="8" fill="#9e9e9e"/><path d="M5.600 6.300C5.700 4.800 6.700 4 8.100 4c1.400 0 2.400.8 2.400 2 0 1.700-2.200 1.700-2.200 3.400" fill="none" stroke="#f5f5f5" stroke-width="1.700"/><circle cx="8.200" cy="11.800" r="1.100" fill="#f5f5f5"/></svg>
<svg style="left:1662.400px;top:24px" width="15" height="16" viewBox="0 0 15 16"><path fill="#9e9e9e" d="M7.500 0c.6 0 1 .4 1 1v.5c2.300.5 3.800 2.400 3.800 4.800 0 3.200 1.100 4.200 1.900 5 .6.700.1 1.700-.7 1.700H1.500c-.8 0-1.300-1-.7-1.700.8-.8 1.900-1.800 1.900-5 0-2.400 1.500-4.300 3.800-4.800V1c0-.6.4-1 1-1zM5.500 14h4c0 1.100-.9 2-2 2s-2-.9-2-2z"/></svg>
<svg style="left:1707px;top:25px" width="16" height="14" viewBox="0 0 16 14"><rect width="16" height="14" fill="#cfcfcf"/><g fill="#9e9e9e"><rect x="0" y="0" width="7.500" height="6.500"/><rect x="8.500" y="0" width="7.500" height="6.500"/><rect x="0" y="7.500" width="7.500" height="6.500"/><rect x="8.500" y="7.500" width="7.500" height="6.500"/></g></svg>
<svg style="left:1745.600px;top:25.300px" width="17" height="14" viewBox="0 0 17 14"><path fill="none" stroke="#9e9e9e" stroke-width="1.900" d="M6 2H2.900C1.900 2 1.100 2.800 1.100 3.800v6.100c0 1 .8 1.800 1.800 1.800H6"/><path fill="#9e9e9e" d="M4.900 4.700h4.900V1.700c0-.7.800-1 1.300-.5l5 5c.3.300.3.800 0 1.100l-5 5c-.5.500-1.300.2-1.300-.5V8.800H4.900c-.4 0-.7-.3-.7-.7V5.400c0-.4.300-.7.700-.7z"/></svg>
<span style="position:absolute;top:22.20px;line-height:20px;font-size:15px;color:#1f1f1f;font-weight:400;white-space:pre;left:1781.50px;transform:scaleX(0.9876);transform-origin:0 50%;">Eddie</span>
<div style="left:1832.200px;top:7px;width:50px;height:50px;border-radius:50%;background:#7e57c2"></div>
<span style="position:absolute;top:22.30px;line-height:20px;font-size:27.5px;color:#fff;font-weight:400;white-space:pre;line-height:30px;margin-top:-5px;left:1849.50px;transform:scaleX(0.7687);transform-origin:0 50%;">E</span>
</div></body></html>
